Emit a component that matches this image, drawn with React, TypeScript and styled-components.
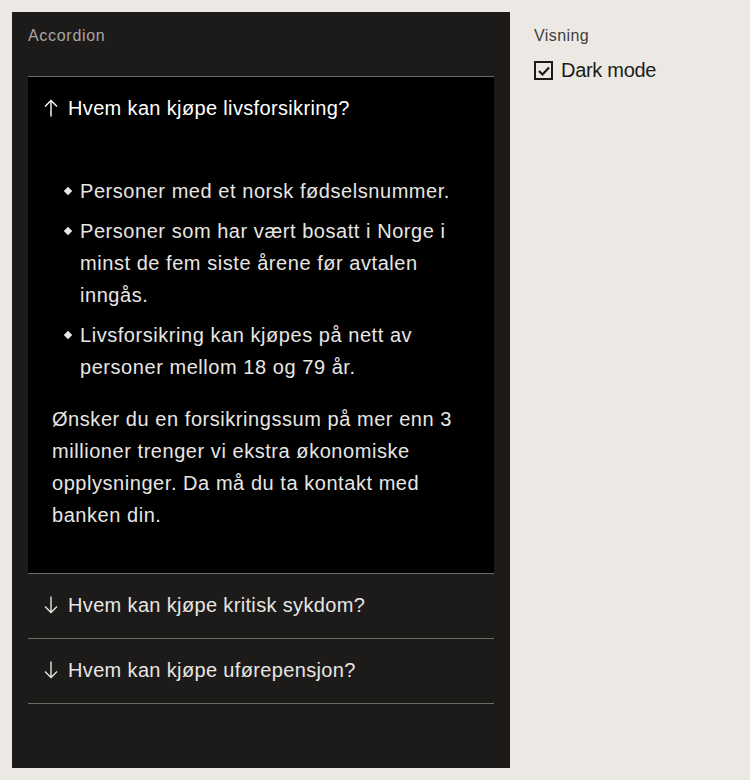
import React, { useState } from "react";
import styled, { createGlobalStyle } from "styled-components";

const Global = createGlobalStyle`
  html, body { margin: 0; padding: 0; background: #ece9e4; }
  body { font-family: "Liberation Sans", Arial, sans-serif; }
  * { box-sizing: border-box; }
`;

const Page = styled.div`
  display: flex;
  gap: 24px;
  padding: 12px;
  min-height: 780px;
  align-items: flex-start;
`;

const Panel = styled.section`
  width: 498px;
  min-height: 756px;
  background: #1c1b1a;
  padding: 16px 16px;
  display: flex;
  flex-direction: column;
`;

const Label = styled.div`
  font-size: 16px;
  line-height: 14px;
  letter-spacing: 0.7px;
  color: #a8a6a3;
  padding-top: 1px;
  margin-bottom: 33px;
`;

const Item = styled.div<{ $open?: boolean }>`
  border-top: 1px solid #6d6b68;
  background: ${(p) => (p.$open ? "#000" : "transparent")};
  &:last-child { border-bottom: 1px solid #6d6b68; }
`;

const Header = styled.button<{ $open?: boolean }>`
  all: unset;
  display: flex;
  align-items: center;
  gap: 10px;
  width: 100%;
  height: 64px;
  padding: 0 16px 2px;
  font-family: "Liberation Sans", Arial, sans-serif;
  font-size: 20px;
  letter-spacing: 0.35px;
  color: ${(p) => (p.$open ? "#ffffff" : "#e8e6e3")};
  cursor: pointer;
  box-sizing: border-box;
`;

const Arrow = styled.svg`
  width: 14px;
  height: 18px;
  flex: none;
`;

const Body = styled.div`
  padding: 34px 24px 42px;
  color: #e8e6e3;
  font-size: 20px;
  line-height: 32px;
  letter-spacing: 0.55px;
`;

const List = styled.ul`
  list-style: none;
  margin: 0 0 20px;
  padding: 0 0 0 28px;
  display: flex;
  flex-direction: column;
  gap: 8px;
`;

const Li = styled.li`
  position: relative;
  &::before {
    content: "";
    position: absolute;
    left: -15px;
    top: 13px;
    width: 6px;
    height: 6px;
    background: #e8e6e3;
    transform: rotate(45deg);
  }
`;

const P = styled.p`
  margin: 0;
`;

const Side = styled.aside`
  padding-top: 16px;
  display: flex;
  flex-direction: column;
  gap: 16px;
`;

const CheckRow = styled.label`
  display: flex;
  align-items: center;
  gap: 8px;
  font-size: 20px;
  letter-spacing: -0.3px;
  color: #1c1b1a;
`;

const Box = styled.span`
  width: 19px;
  height: 19px;
  border: 2px solid #1c1b1a;
  display: flex;
  align-items: center;
  justify-content: center;
`;

const SideLabel = styled.div`
  font-size: 16px;
  line-height: 14px;
  letter-spacing: 0.4px;
  padding-top: 1px;
  color: #3f3e3c;
`;

function ArrowIcon({ up }: { up: boolean }) {
  return (
    <Arrow viewBox="0 0 14 18" fill="none" stroke="currentColor" strokeWidth="1.4">
      {up ? (
        <>
          <path d="M7 1.5v16" />
          <path d="M1 7.5L7 1.5l6 6" />
        </>
      ) : (
        <>
          <path d="M7 0.5v16" />
          <path d="M1 10.5L7 16.5l6-6" />
        </>
      )}
    </Arrow>
  );
}

export default function App() {
  const [open, setOpen] = useState(0);
  const items = [
    "Hvem kan kjøpe livsforsikring?",
    "Hvem kan kjøpe kritisk sykdom?",
    "Hvem kan kjøpe uførepensjon?",
  ];
  return (
    <>
      <Global />
      <Page>
        <Panel>
          <Label>Accordion</Label>
          <div>
            {items.map((t, i) => (
              <Item key={t} $open={open === i}>
                <Header $open={open === i} onClick={() => setOpen(open === i ? -1 : i)}>
                  <ArrowIcon up={open === i} />
                  {t}
                </Header>
                {open === i && i === 0 && (
                  <Body>
                    <List>
                      <Li>Personer med et norsk fødselsnummer.</Li>
                      <Li>Personer som har vært bosatt i Norge i minst de fem siste årene før avtalen inngås.</Li>
                      <Li>Livsforsikring kan kjøpes på nett av personer mellom 18 og 79 år.</Li>
                    </List>
                    <P>
                      Ønsker du en forsikringssum på mer enn 3 millioner trenger vi ekstra økonomiske
                      opplysninger. Da må du ta kontakt med banken din.
                    </P>
                  </Body>
                )}
              </Item>
            ))}
          </div>
        </Panel>
        <Side>
          <SideLabel>Visning</SideLabel>
          <CheckRow>
            <Box>
              <svg width="12" height="10" viewBox="0 0 12 10" fill="none" stroke="#1c1b1a" strokeWidth="2.2">
                <path d="M1 5l3.5 3.5L11 1.5" />
              </svg>
            </Box>
            Dark mode
          </CheckRow>
        </Side>
      </Page>
    </>
  );
}
